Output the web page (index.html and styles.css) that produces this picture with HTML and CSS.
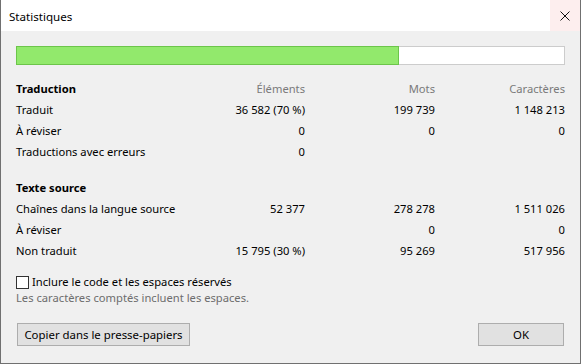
FILE: index.html
```html
<!DOCTYPE html>
<html lang="fr">
<head>
<meta charset="utf-8">
<title>Statistiques</title>
<link rel="stylesheet" href="styles.css">
</head>
<body>
<div class="window">
  <div class="titlebar">
    <span class="title">Statistiques</span>
    <span class="close">
      <svg width="10" height="10" viewBox="0 0 10 10"><path d="M0.5 0.5 L9.5 9.5 M9.5 0.5 L0.5 9.5" stroke="#111" stroke-width="1" fill="none"/></svg>
    </span>
  </div>
  <div class="content">
    <div class="progress"><div class="fill" style="width:70%"></div></div>

    <div class="stats first">
      <div class="label head">Traduction</div>
      <div class="num colhead">Éléments</div>
      <div class="num colhead">Mots</div>
      <div class="num colhead">Caractères</div>

      <div class="label">Traduit</div>
      <div class="num">36 582 (70 %)</div>
      <div class="num">199 739</div>
      <div class="num">1 148 213</div>

      <div class="label">À réviser</div>
      <div class="num">0</div>
      <div class="num">0</div>
      <div class="num">0</div>

      <div class="label">Traductions avec erreurs</div>
      <div class="num">0</div>
      <div class="num"></div>
      <div class="num"></div>
    </div>

    <div class="stats second">
      <div class="label head">Texte source</div>
      <div class="num"></div>
      <div class="num"></div>
      <div class="num"></div>

      <div class="label">Chaînes dans la langue source</div>
      <div class="num">52 377</div>
      <div class="num">278 278</div>
      <div class="num">1 511 026</div>

      <div class="label">À réviser</div>
      <div class="num"></div>
      <div class="num">0</div>
      <div class="num">0</div>

      <div class="label">Non traduit</div>
      <div class="num">15 795 (30 %)</div>
      <div class="num">95 269</div>
      <div class="num">517 956</div>
    </div>

    <label class="check"><span class="box"></span>Inclure le code et les espaces réservés</label>
    <div class="note">Les caractères comptés incluent les espaces.</div>

    <div class="buttons">
      <button class="btn copy">Copier dans le presse-papiers</button>
      <button class="btn ok">OK</button>
    </div>
  </div>
</div>
</body>
</html>
```
FILE: styles.css
```css
* { box-sizing: border-box; }
html, body { margin: 0; padding: 0; }
body {
  font-family: "Noto Sans", "Segoe UI", Arial, sans-serif;
  font-size: 11.2px;
  color: #000;
  background: #fff;
}
.window {
  width: 581px;
  height: 364px;
  border: 1px solid #707070;
  border-top: none;
  display: flex;
  flex-direction: column;
  background: #f0f0f0;
}
.titlebar {
  height: 31px;
  background: #fff;
  display: flex;
  align-items: center;
  justify-content: space-between;
  flex: none;
}
.title {
  padding-left: 8px;
  font-size: 11.6px;
  margin-top: 1px;
}
.close {
  width: 30px;
  height: 31px;
  background: #fdeeee;
  display: flex;
  align-items: center;
  justify-content: center;
}
.content {
  padding: 15px 15px 0 15px;
  display: flex;
  flex-direction: column;
  flex: 1;
}
.progress {
  height: 19px;
  width: 549px;
  border: 1px solid #cccccc;
  background: #fff;
  display: flex;
}
.fill {
  background: #92e96c;
  border: 1px solid #6cc54a;
  margin: -1px 0 0 -1px;
  height: 19px;
}
.stats {
  display: grid;
  grid-template-columns: 159px 130px 130px 130px;
  grid-auto-rows: 21px;
  line-height: 21px;
}
.stats.first { margin-top: 13px; }
.stats.second { margin-top: 15px; }
.label { white-space: nowrap; }
.head { font-weight: bold; }
.num { text-align: right; white-space: nowrap; }
.colhead { color: #7a7a7a; }
.check {
  margin-top: 13px;
  display: flex;
  align-items: center;
  height: 16px;
  line-height: 16px;
}
.box {
  width: 13px;
  height: 13px;
  border: 1px solid #333;
  background: #fff;
  margin-right: 3px;
  flex: none;
}
.note {
  color: #6d6d6d;
  line-height: 16px;
}
.buttons {
  display: flex;
  justify-content: space-between;
  margin-top: 17px;
  padding-left: 1px;
}
.btn {
  font-family: inherit;
  font-size: 11.4px;
  height: 23px;
  background: #e1e1e1;
  border: 1px solid #adadad;
  color: #000;
  padding: 0;
  border-radius: 0;
}
.copy { width: 173px; }
.ok { width: 86px; margin-right: 1px; }
```
